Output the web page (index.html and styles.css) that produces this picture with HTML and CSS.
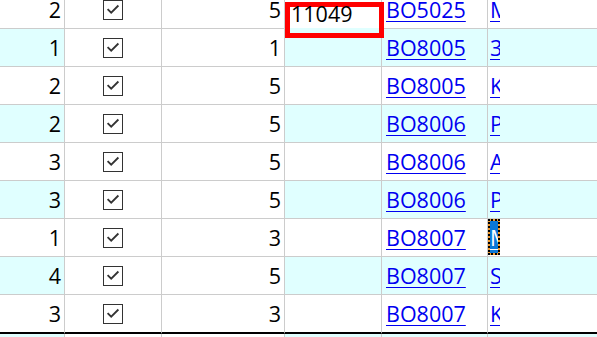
FILE: index.html
```html
<!DOCTYPE html>
<html>
<head>
<meta charset="utf-8">
<link rel="stylesheet" href="styles.css">
</head>
<body>
<div class="grid">
  <div class="row">
    <div class="c num">2</div><div class="c chk"><span class="box"><svg viewBox="0 0 20 20"><polyline points="4,9 8,13 16,5"/></svg></span></div><div class="c num3">5</div><div class="c edit"></div><div class="c code"><a href="#">BO5025</a></div><div class="c last"><a class="clip" href="#">M</a></div>
  </div>
  <div class="row alt">
    <div class="c num">1</div><div class="c chk"><span class="box"><svg viewBox="0 0 20 20"><polyline points="4,9 8,13 16,5"/></svg></span></div><div class="c num3">1</div><div class="c edit"></div><div class="c code"><a href="#">BO8005</a></div><div class="c last"><a class="clip" href="#">3</a></div>
  </div>
  <div class="row">
    <div class="c num">2</div><div class="c chk"><span class="box"><svg viewBox="0 0 20 20"><polyline points="4,9 8,13 16,5"/></svg></span></div><div class="c num3">5</div><div class="c edit"></div><div class="c code"><a href="#">BO8005</a></div><div class="c last"><a class="clip" href="#">K</a></div>
  </div>
  <div class="row alt">
    <div class="c num">2</div><div class="c chk"><span class="box"><svg viewBox="0 0 20 20"><polyline points="4,9 8,13 16,5"/></svg></span></div><div class="c num3">5</div><div class="c edit"></div><div class="c code"><a href="#">BO8006</a></div><div class="c last"><a class="clip" href="#">P</a></div>
  </div>
  <div class="row">
    <div class="c num">3</div><div class="c chk"><span class="box"><svg viewBox="0 0 20 20"><polyline points="4,9 8,13 16,5"/></svg></span></div><div class="c num3">5</div><div class="c edit"></div><div class="c code"><a href="#">BO8006</a></div><div class="c last"><a class="clip" href="#">A</a></div>
  </div>
  <div class="row alt">
    <div class="c num">3</div><div class="c chk"><span class="box"><svg viewBox="0 0 20 20"><polyline points="4,9 8,13 16,5"/></svg></span></div><div class="c num3">5</div><div class="c edit"></div><div class="c code"><a href="#">BO8006</a></div><div class="c last"><a class="clip" href="#">P</a></div>
  </div>
  <div class="row">
    <div class="c num">1</div><div class="c chk"><span class="box"><svg viewBox="0 0 20 20"><polyline points="4,9 8,13 16,5"/></svg></span></div><div class="c num3">3</div><div class="c edit"></div><div class="c code"><a href="#">BO8007</a></div><div class="c last"><a class="clip sel" href="#">M</a></div>
  </div>
  <div class="row alt">
    <div class="c num">4</div><div class="c chk"><span class="box"><svg viewBox="0 0 20 20"><polyline points="4,9 8,13 16,5"/></svg></span></div><div class="c num3">5</div><div class="c edit"></div><div class="c code"><a href="#">BO8007</a></div><div class="c last"><a class="clip" href="#">S</a></div>
  </div>
  <div class="row end">
    <div class="c num">3</div><div class="c chk"><span class="box"><svg viewBox="0 0 20 20"><polyline points="4,9 8,13 16,5"/></svg></span></div><div class="c num3">3</div><div class="c edit"></div><div class="c code"><a href="#">BO8007</a></div><div class="c last"><a class="clip" href="#">K</a></div>
  </div>
  <div class="row alt">
    <div class="c num"></div><div class="c chk"></div><div class="c num3"></div><div class="c edit"></div><div class="c code"></div><div class="c last"></div>
  </div>
  <div class="editor">11049</div>
</div>
</body>
</html>
```

FILE: styles.css
```css
html, body {
  margin: 0;
  padding: 0;
  background: #fff;
  overflow: hidden;
}
body {
  font-family: "Open Sans", "Noto Sans", sans-serif;
  font-size: 21.5px;
  color: #000;
}
.grid {
  position: relative;
  margin-top: -9px;
}
.row {
  display: grid;
  grid-template-columns: 65px 97px 123px 97px 106px 1fr;
}
.c {
  box-sizing: border-box;
  height: 38px;
  line-height: 37px;
  border-right: 1px solid #ccc;
  border-bottom: 1px solid #ccc;
  white-space: nowrap;
  overflow: hidden;
  background: #fff;
}
.row.end .c {
  height: 39px;
  border-bottom: 2px solid #000;
}
.row.alt .num,
.row.alt .edit,
.row.alt .code,
.row.alt .last {
  background: #e0ffff;
}
.num, .num3 {
  text-align: right;
  padding-right: 3px;
}
.chk {
  display: flex;
  align-items: center;
  justify-content: center;
  padding-top: 1px;
}
.box {
  box-sizing: border-box;
  width: 20px;
  height: 20px;
  border: 1px solid #333;
  background: #fff;
  display: block;
}
.box svg {
  display: block;
  width: 18px;
  height: 18px;
  fill: none;
  stroke: #333;
  stroke-width: 2;
}
.code {
  padding-left: 4px;
}
a {
  color: #0000f0;
  text-decoration: underline;
  text-decoration-thickness: 1px;
  text-underline-offset: 3px;
}
.last {
  border-right: none;
}
.clip {
  display: block;
  box-sizing: border-box;
  width: 12px;
  height: 37px;
  padding-left: 2px;
  overflow: hidden;
}
.clip.sel {
  width: 12px;
  height: 36px;
  padding-left: 0;
  line-height: 33px;
  border: 2px dotted #000;
  color: #fff;
  background: linear-gradient(#0a78d7, #0a78d7) padding-box, #f39a2a;
}
.editor {
  position: absolute;
  left: 285px;
  top: 11px;
  width: 99px;
  height: 36px;
  box-sizing: border-box;
  border: 5px solid #f00;
  padding-left: 1px;
  line-height: 14px;
  background: linear-gradient(#fff 21px, #e0ffff 21px) padding-box;
}
```
